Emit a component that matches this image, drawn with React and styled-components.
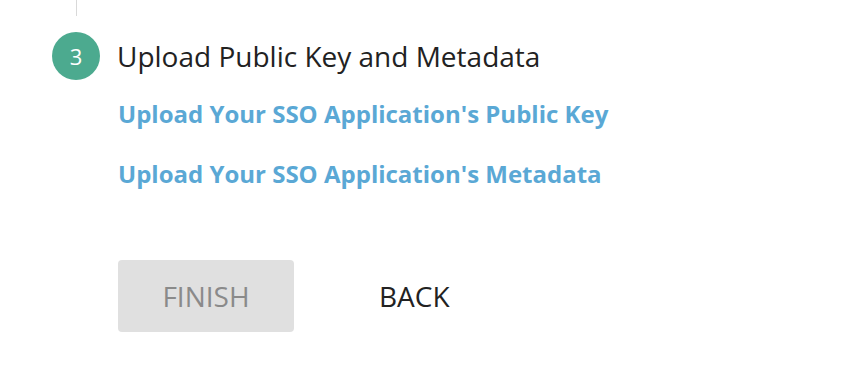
import React from 'react';
import styled, { createGlobalStyle } from 'styled-components';

const GlobalStyle = createGlobalStyle`
  html, body {
    margin: 0;
    padding: 0;
    background: #fff;
    font-family: "Open Sans", "Liberation Sans", sans-serif;
  }
`;

export default function App() {
  return (
    <>
      <GlobalStyle />
      <StPage>
        <StConnector />
        <StStep>
          <StIcon>3</StIcon>
          <StLabel>Upload Public Key and Metadata</StLabel>
        </StStep>
        <StContent>
          <StLinks>
            <StLink href="#">Upload Your SSO Application&#39;s Public Key</StLink>
            <StLink href="#">Upload Your SSO Application&#39;s Metadata</StLink>
          </StLinks>
          <StActions>
            <StButton type="button" disabled>
              FINISH
            </StButton>
            <StButton type="button" variant="text">
              BACK
            </StButton>
          </StActions>
        </StContent>
      </StPage>
    </>
  );
}

const StPage = styled.div`
  display: flex;
  flex-direction: column;
  width: 850px;
  height: 366px;
  padding-left: 52px;
  box-sizing: border-box;
`;

const StConnector = styled.div`
  width: 1px;
  height: 16px;
  margin-left: 24px;
  background: #d9d9d9;
`;

const StStep = styled.div`
  display: flex;
  align-items: center;
  gap: 17px;
  margin-top: 16px;
`;

const StIcon = styled.div`
  display: flex;
  align-items: center;
  justify-content: center;
  flex-shrink: 0;
  width: 48px;
  height: 48px;
  border-radius: 50%;
  background: #4caa8f;
  color: #fff;
  font-size: 22px;
`;

const StLabel = styled.div`
  font-size: 28px;
  color: #222;
`;

const StContent = styled.div`
  display: flex;
  flex-direction: column;
  padding-left: 66px;
`;

const StLinks = styled.div`
  display: flex;
  flex-direction: column;
  align-items: flex-start;
  gap: 28px;
  margin-top: 18px;
`;

const StLink = styled.a`
  font-size: 24px;
  font-weight: 700;
  line-height: 32px;
  color: #5aa8d5;
  text-decoration: none;
`;

const StActions = styled.div`
  display: flex;
  align-items: center;
  gap: 61px;
  margin-top: 70px;
`;

const StButton = styled.button`
  min-width: ${props => (props.variant === 'text' ? '0' : '176px')};
  height: 72px;
  padding: 0 24px;
  border: none;
  border-radius: 4px;
  background: ${props => (props.variant === 'text' ? 'transparent' : '#e0e0e0')};
  color: ${props => (props.variant === 'text' ? '#222' : '#8a8a8a')};
  font-family: inherit;
  font-size: 28px;
  cursor: pointer;

  &:disabled {
    cursor: default;
  }
`;
